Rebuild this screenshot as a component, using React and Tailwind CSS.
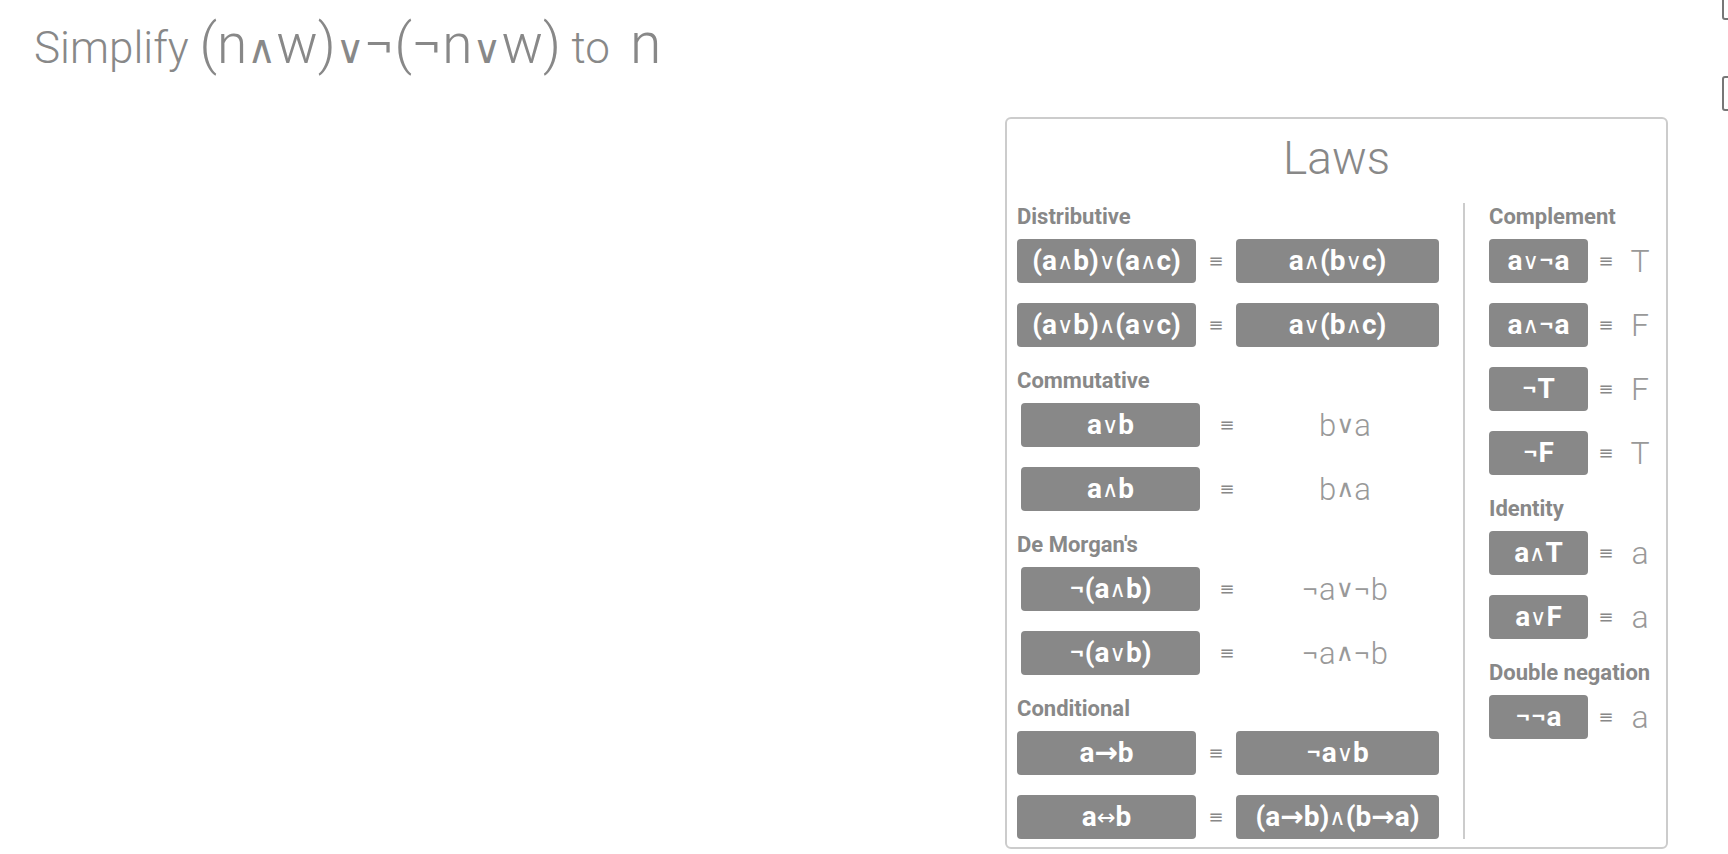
import React from 'react';

const twoSided = {
  Distributive: [
    ['(a∧b)∨(a∧c)', 'a∧(b∨c)'],
    ['(a∨b)∧(a∨c)', 'a∨(b∧c)'],
  ],
  Conditional: [
    ['a→b', '¬a∨b'],
    ['a↔b', '(a→b)∧(b→a)'],
  ],
};

const oneSided = {
  Commutative: [
    ['a∨b', 'b∨a'],
    ['a∧b', 'b∧a'],
  ],
  "De Morgan's": [
    ['¬(a∧b)', '¬a∨¬b'],
    ['¬(a∨b)', '¬a∧¬b'],
  ],
};

const rightLaws = [
  ['Complement', [['a∨¬a', 'T'], ['a∧¬a', 'F'], ['¬T', 'F'], ['¬F', 'T']]],
  ['Identity', [['a∧T', 'a'], ['a∨F', 'a']]],
  ['Double negation', [['¬¬a', 'a']]],
];

// and / or / iff glyphs are thin in the original
const Expr = ({ text, opClass = 'text-[0.8em]' }) =>
  text.split(/([∧∨↔])/).map((part, i) =>
    /^[∧∨↔]$/.test(part) ? (
      <span key={i} className={"font-['DejaVu_Sans',sans-serif] font-normal " + opClass}>
        {part}
      </span>
    ) : (
      <React.Fragment key={i}>{part}</React.Fragment>
    )
  );

const Chip = ({ text }) => (
  <div className="h-[44px] rounded-[4px] bg-[#888888] text-white font-bold text-[28px] leading-none flex items-center justify-center">
    <Expr text={text} />
  </div>
);

const Equiv = () => (
  <div className="flex items-center justify-center text-[#888888] text-[18px] leading-none">≡</div>
);

const Label = ({ children, first }) => (
  <div
    className={
      'text-[22px] leading-[24px] font-bold text-[#888888] mb-[10px] ' +
      (first ? '' : 'mt-[22px]')
    }
  >
    {children}
  </div>
);

const TwoSided = ({ name, rows, first }) => (
  <div>
    <Label first={first}>{name}</Label>
    <div className="flex flex-col gap-[20px]">
      {rows.map(([l, r]) => (
        <div key={l} className="grid grid-cols-[179px_40px_203px]">
          <Chip text={l} />
          <Equiv />
          <Chip text={r} />
        </div>
      ))}
    </div>
  </div>
);

const OneSided = ({ name, rows }) => (
  <div>
    <Label>{name}</Label>
    <div className="flex flex-col gap-[20px]">
      {rows.map(([l, r]) => (
        <div key={l} className="grid grid-cols-[179px_54px_182px] pl-[4px]">
          <Chip text={l} />
          <Equiv />
          <div className="flex items-center justify-center text-[31px] leading-none font-light text-[#999999]">
            <Expr text={r} />
          </div>
        </div>
      ))}
    </div>
  </div>
);

const App = () => {
  return (
    <div className="w-full h-screen overflow-hidden flex bg-white font-['Roboto','DejaVu_Sans',sans-serif]">
      <div className="flex-1 pl-[34px] pt-[18px]">
        <h1 className="text-[44px] leading-[52px] font-light text-[#888888] whitespace-nowrap">
          Simplify{' '}
          <span className="text-[55px]">
            <Expr text="(n∧w)∨¬(¬n∨w)" opClass="text-[0.72em]" />
          </span>{' '}
          to<span className="text-[57px] ml-[6px]"> n</span>
        </h1>
      </div>

      <div className="w-[663px] self-start mt-[117px] border-2 border-[#cccccc] rounded-[6px] pt-[12px] pb-[8px]">
        <h2 className="text-center text-[46px] leading-[54px] font-light text-[#888888]">Laws</h2>
        <div className="mt-[18px] flex">
          <div className="w-[456px] pl-[10px] pr-[24px] pt-[2px]">
            <TwoSided name="Distributive" rows={twoSided.Distributive} first />
            <OneSided name="Commutative" rows={oneSided.Commutative} />
            <OneSided name="De Morgan's" rows={oneSided["De Morgan's"]} />
            <TwoSided name="Conditional" rows={twoSided.Conditional} />
          </div>
          <div className="w-[2px] bg-[#cccccc]" />
          <div className="w-[201px] pl-[24px] pt-[2px]">
            {rightLaws.map(([name, rows], i) => (
              <div key={name}>
                <Label first={i === 0}>{name}</Label>
                <div className="flex flex-col gap-[20px]">
                  {rows.map(([l, r]) => (
                    <div key={l} className="grid grid-cols-[99px_36px_32px]">
                      <Chip text={l} />
                      <Equiv />
                      <div className="flex items-center justify-center text-[32px] leading-none font-light text-[#999999]">
                        {r}
                      </div>
                    </div>
                  ))}
                </div>
              </div>
            ))}
          </div>
        </div>
      </div>

      <div className="ml-[54px] w-[6px] overflow-hidden flex flex-col">
        <div className="-mt-[20px] w-[60px] h-[40px] shrink-0 border-2 border-[#777777] rounded-[3px]" />
        <div className="mt-[56px] w-[60px] h-[35px] shrink-0 border-2 border-[#777777] rounded-[3px]" />
      </div>
    </div>
  );
};

export default App;
